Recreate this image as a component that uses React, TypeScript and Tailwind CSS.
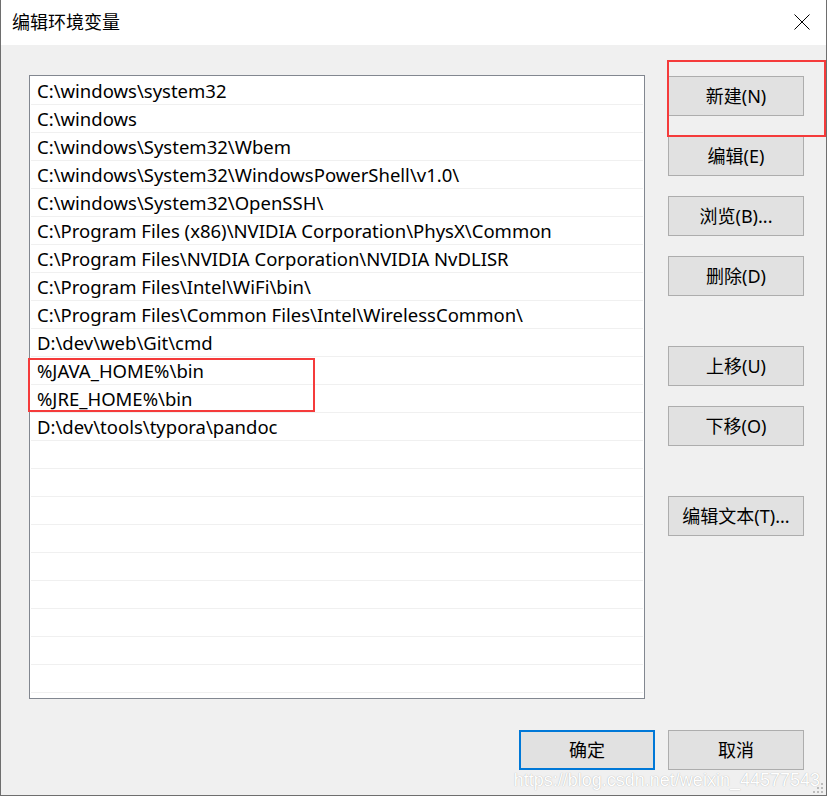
const paths = [
  "C:\\windows\\system32",
  "C:\\windows",
  "C:\\windows\\System32\\Wbem",
  "C:\\windows\\System32\\WindowsPowerShell\\v1.0\\",
  "C:\\windows\\System32\\OpenSSH\\",
  "C:\\Program Files (x86)\\NVIDIA Corporation\\PhysX\\Common",
  "C:\\Program Files\\NVIDIA Corporation\\NVIDIA NvDLISR",
  "C:\\Program Files\\Intel\\WiFi\\bin\\",
  "C:\\Program Files\\Common Files\\Intel\\WirelessCommon\\",
  "D:\\dev\\web\\Git\\cmd",
  "%JAVA_HOME%\\bin",
  "%JRE_HOME%\\bin",
  "D:\\dev\\tools\\typora\\pandoc",
]

const rows = [...paths, ...Array(22 - paths.length).fill("")]

const Btn = ({ label, primary = false }: { label: string; primary?: boolean }) => (
  <button
    className={
      "w-[136px] h-[40px] bg-[#e1e1e1] text-[18px] text-black flex items-center justify-center " +
      (primary ? "border-2 border-[#0078d7]" : "border border-[#adadad]")
    }
  >
    {label}
  </button>
)

const App = () => {
  return (
    <div
      className="relative w-[827px] h-[796px] bg-[#f0f0f0] border-l border-r border-b border-[#6e6e6e] flex flex-col overflow-hidden"
      style={{ fontFamily: '"Noto Sans", "Noto Sans CJK SC", sans-serif' }}
    >
      {/* Title bar */}
      <div className="h-[45px] bg-white flex items-center justify-between pl-[11px] pr-[16px] shrink-0">
        <span className="text-[18px] text-black leading-none pb-[2px]">编辑环境变量</span>
        <svg width="16" height="16" viewBox="0 0 16 16" className="mb-[1px]">
          <path d="M0.5 0.5 L15.5 15.5 M15.5 0.5 L0.5 15.5" stroke="#000" strokeWidth="1" fill="none" />
        </svg>
      </div>

      {/* Body */}
      <div className="flex pl-[28px] pt-[30px] gap-[23px]">
        <div className="relative w-[616px] h-[624px] bg-white border border-[#828790] pt-[1px]">
          {rows.map((p, i) => (
            <div
              key={i}
              className="mx-[1px] h-[28px] border-b border-[#f0f0f0] flex items-center pl-[6px] pt-[2px] text-[18.5px] text-black leading-none whitespace-nowrap"
            >
              {p}
            </div>
          ))}
          {/* highlight around JAVA/JRE rows */}
          <div className="absolute left-[-2px] top-[282px] w-[287px] h-[54px] border-2 border-[#f53b3b]" />
        </div>

        <div className="flex flex-col pt-[1px]">
          <Btn label="新建(N)" />
          <div className="mt-[20px]"><Btn label="编辑(E)" /></div>
          <div className="mt-[20px]"><Btn label="浏览(B)..." /></div>
          <div className="mt-[20px]"><Btn label="删除(D)" /></div>
          <div className="mt-[50px]"><Btn label="上移(U)" /></div>
          <div className="mt-[20px]"><Btn label="下移(O)" /></div>
          <div className="mt-[50px]"><Btn label="编辑文本(T)..." /></div>
        </div>
      </div>

      {/* Footer buttons */}
      <div className="flex justify-end gap-[13px] pr-[22px] mt-[31px]">
        <Btn label="确定" primary />
        <Btn label="取消" />
      </div>

      {/* highlight around 新建 */}
      <div className="absolute left-[666px] top-[60px] w-[159px] h-[77px] border-2 border-[#f53b3b]" />

      {/* watermark */}
      <div
        className="absolute right-[6px] bottom-[6px] text-[18px] text-white leading-none [text-shadow:0_0_1px_#a0a0a0]"
        style={{ fontFamily: '"Liberation Sans", sans-serif' }}
      >
        https://blog.csdn.net/weixin_44577543
      </div>

      {/* resize grip */}
      <div className="absolute right-[3px] bottom-[2px] grid grid-cols-3 gap-[2px]">
        <span className="w-[2px] h-[2px]" />
        <span className="w-[2px] h-[2px]" />
        <span className="w-[2px] h-[2px] bg-[#bcbcbc]" />
        <span className="w-[2px] h-[2px]" />
        <span className="w-[2px] h-[2px] bg-[#bcbcbc]" />
        <span className="w-[2px] h-[2px] bg-[#bcbcbc]" />
        <span className="w-[2px] h-[2px] bg-[#bcbcbc]" />
        <span className="w-[2px] h-[2px] bg-[#bcbcbc]" />
        <span className="w-[2px] h-[2px] bg-[#bcbcbc]" />
      </div>
    </div>
  )
}

export default App
